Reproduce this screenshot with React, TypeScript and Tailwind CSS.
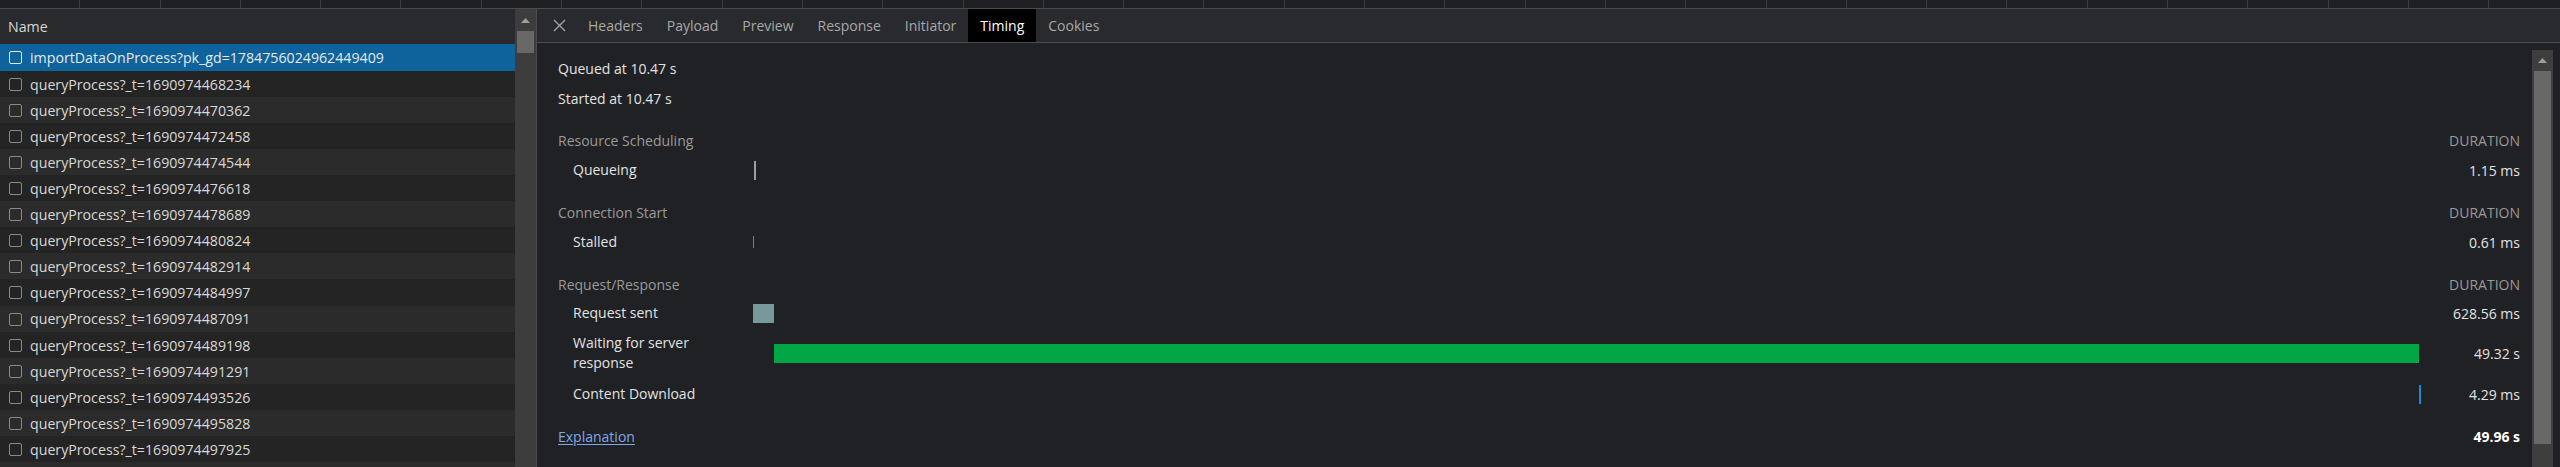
const requests = [
  "queryProcess?_t=1690974468234",
  "queryProcess?_t=1690974470362",
  "queryProcess?_t=1690974472458",
  "queryProcess?_t=1690974474544",
  "queryProcess?_t=1690974476618",
  "queryProcess?_t=1690974478689",
  "queryProcess?_t=1690974480824",
  "queryProcess?_t=1690974482914",
  "queryProcess?_t=1690974484997",
  "queryProcess?_t=1690974487091",
  "queryProcess?_t=1690974489198",
  "queryProcess?_t=1690974491291",
  "queryProcess?_t=1690974493526",
  "queryProcess?_t=1690974495828",
  "queryProcess?_t=1690974497925",
  "",
];

const tabs = ["Headers", "Payload", "Preview", "Response", "Initiator", "Timing", "Cookies"];

type Phase = { label: string; bar: string; value: string; row: string };

const sections: { title: string; phases: Phase[] }[] = [
  {
    title: "Resource Scheduling",
    phases: [
      { label: "Queueing", bar: "ml-[1px] w-[2px] h-[19px] bg-[#9e9e9e]", value: "1.15 ms", row: "h-[30px]" },
    ],
  },
  {
    title: "Connection Start",
    phases: [
      { label: "Stalled", bar: "ml-0 w-px h-[12px] bg-[#7c7c7c]", value: "0.61 ms", row: "h-[30px]" },
    ],
  },
  {
    title: "Request/Response",
    phases: [
      { label: "Request sent", bar: "ml-0 w-[21px] h-[19px] bg-[#769a9c]", value: "628.56 ms", row: "h-[28px]" },
      { label: "Waiting for server response", bar: "ml-[21px] w-[1645px] h-[19px] bg-[#00a544]", value: "49.32 s", row: "h-[52px]" },
      { label: "Content Download", bar: "ml-[1666px] w-[2px] h-[19px] bg-[#1a8ad8]", value: "4.29 ms", row: "h-[30px]" },
    ],
  },
];

function Checkbox({ selected }: { selected?: boolean }) {
  return (
    <span
      className={
        selected
          ? "w-[13px] h-[13px] shrink-0 rounded-[2px] border-[1.5px] border-[#e6e6e6]"
          : "w-[13px] h-[13px] shrink-0 rounded-[2px] border-[1.5px] border-[#8a8a8a]"
      }
    />
  );
}

function ScrollArrow() {
  return (
    <svg width="9" height="5" viewBox="0 0 9 5">
      <path d="M0 5 L4.5 0 L9 5 Z" fill="#9d9d9d" />
    </svg>
  );
}

export default function App() {
  return (
    <div className="w-[2560px] h-[467px] overflow-hidden bg-[#202124] flex flex-col font-['Open_Sans',sans-serif] text-[14px]">
      {/* overview ticks */}
      <div className="h-[8px] flex shrink-0 bg-[#1f2023]">
        {Array.from({ length: 32 }).map((_, i) => (
          <div key={i} className="w-[80.3px] h-full shrink-0 border-r border-[#3a3b3f]" />
        ))}
      </div>
      <div className="h-px shrink-0 bg-[#4a4b4f]" />

      <div className="flex flex-1 min-h-0">
        {/* request list */}
        <div className="w-[515px] shrink-0 flex flex-col overflow-hidden text-[14.2px]">
          <div className="h-[35px] shrink-0 flex items-center px-2 pt-px bg-[#292a2d] text-[#d6d6d6]">Name</div>
          <div className="h-[26.7px] shrink-0 flex items-center gap-[8px] pl-[9px] pt-px bg-[#0e639c] text-[#e8e8e8]">
            <Checkbox selected />
            <span>importDataOnProcess?pk_gd=1784756024962449409</span>
          </div>
          {requests.map((r, i) => (
            <div
              key={i}
              className={
                i % 2 === 0
                  ? "h-[26.1px] shrink-0 flex items-center gap-[8px] pl-[9px] pt-px bg-[#242424] text-[#d8d8d8]"
                  : "h-[26.1px] shrink-0 flex items-center gap-[8px] pl-[9px] pt-px bg-[#2b2b2b] text-[#d8d8d8]"
              }
            >
              {r && <Checkbox />}
              <span>{r}</span>
            </div>
          ))}
        </div>

        {/* list scrollbar */}
        <div className="w-[21px] shrink-0 bg-[#3d3d3d] flex flex-col items-center">
          <div className="h-[22px] flex items-center justify-center">
            <ScrollArrow />
          </div>
          <div className="w-[17px] h-[22px] bg-[#686868]" />
        </div>

        {/* details */}
        <div className="flex-1 min-w-0 flex flex-col border-l border-[#4b4b4b]">
          <div className="h-[34px] shrink-0 flex items-stretch bg-[#292a2d] border-b border-[#4a4c50]">
            <div className="w-[39px] pl-[16px] flex items-center">
              <svg width="13" height="13" viewBox="0 0 13 13">
                <path d="M1 1 L12 12 M12 1 L1 12" stroke="#a3a3a3" strokeWidth="1.4" />
              </svg>
            </div>
            {tabs.map((t) =>
              t === "Timing" ? (
                <div key={t} className="px-[12px] flex items-center bg-black text-white">
                  {t}
                </div>
              ) : (
                <div key={t} className="px-[12px] flex items-center text-[#a8a8a8]">
                  {t}
                </div>
              )
            )}
          </div>

          <div className="flex flex-1 min-h-0">
            <div className="flex-1 min-w-0 pl-[21px] pr-[12px] pt-[10px] text-[#e3e3e3]">
              <div className="h-[30px] flex items-center">Queued at 10.47 s</div>
              <div className="h-[30px] flex items-center">Started at 10.47 s</div>

              {sections.map((s) => (
                <div key={s.title} className="mt-[12px]">
                  <div className="h-[30px] flex items-center justify-between text-[#9a9a9a]">
                    <span>{s.title}</span>
                    <span>DURATION</span>
                  </div>
                  {s.phases.map((p) => (
                    <div key={p.label} className={`${p.row} flex items-center`}>
                      <div className="w-[195px] shrink-0 pl-[15px] pr-[30px] leading-5">{p.label}</div>
                      <div className="flex-1 flex items-center">
                        <div className={p.bar} />
                      </div>
                      <div className="w-[99px] shrink-0 text-right">{p.value}</div>
                    </div>
                  ))}
                </div>
              ))}

              <div className="mt-[12px] h-[30px] flex items-center justify-between">
                <a className="text-[#7fa9e8] underline underline-offset-2">Explanation</a>
                <span className="font-bold text-white">49.96 s</span>
              </div>
            </div>

            {/* details scrollbar */}
            <div className="w-[21px] shrink-0 mt-[7px] bg-[#3e3e3e] flex flex-col items-center">
              <div className="h-[21px] flex items-center justify-center">
                <ScrollArrow />
              </div>
              <div className="w-[17px] h-[373px] bg-[#686868]" />
            </div>
            <div className="w-[7px] shrink-0" />
          </div>
        </div>
      </div>
    </div>
  );
}
